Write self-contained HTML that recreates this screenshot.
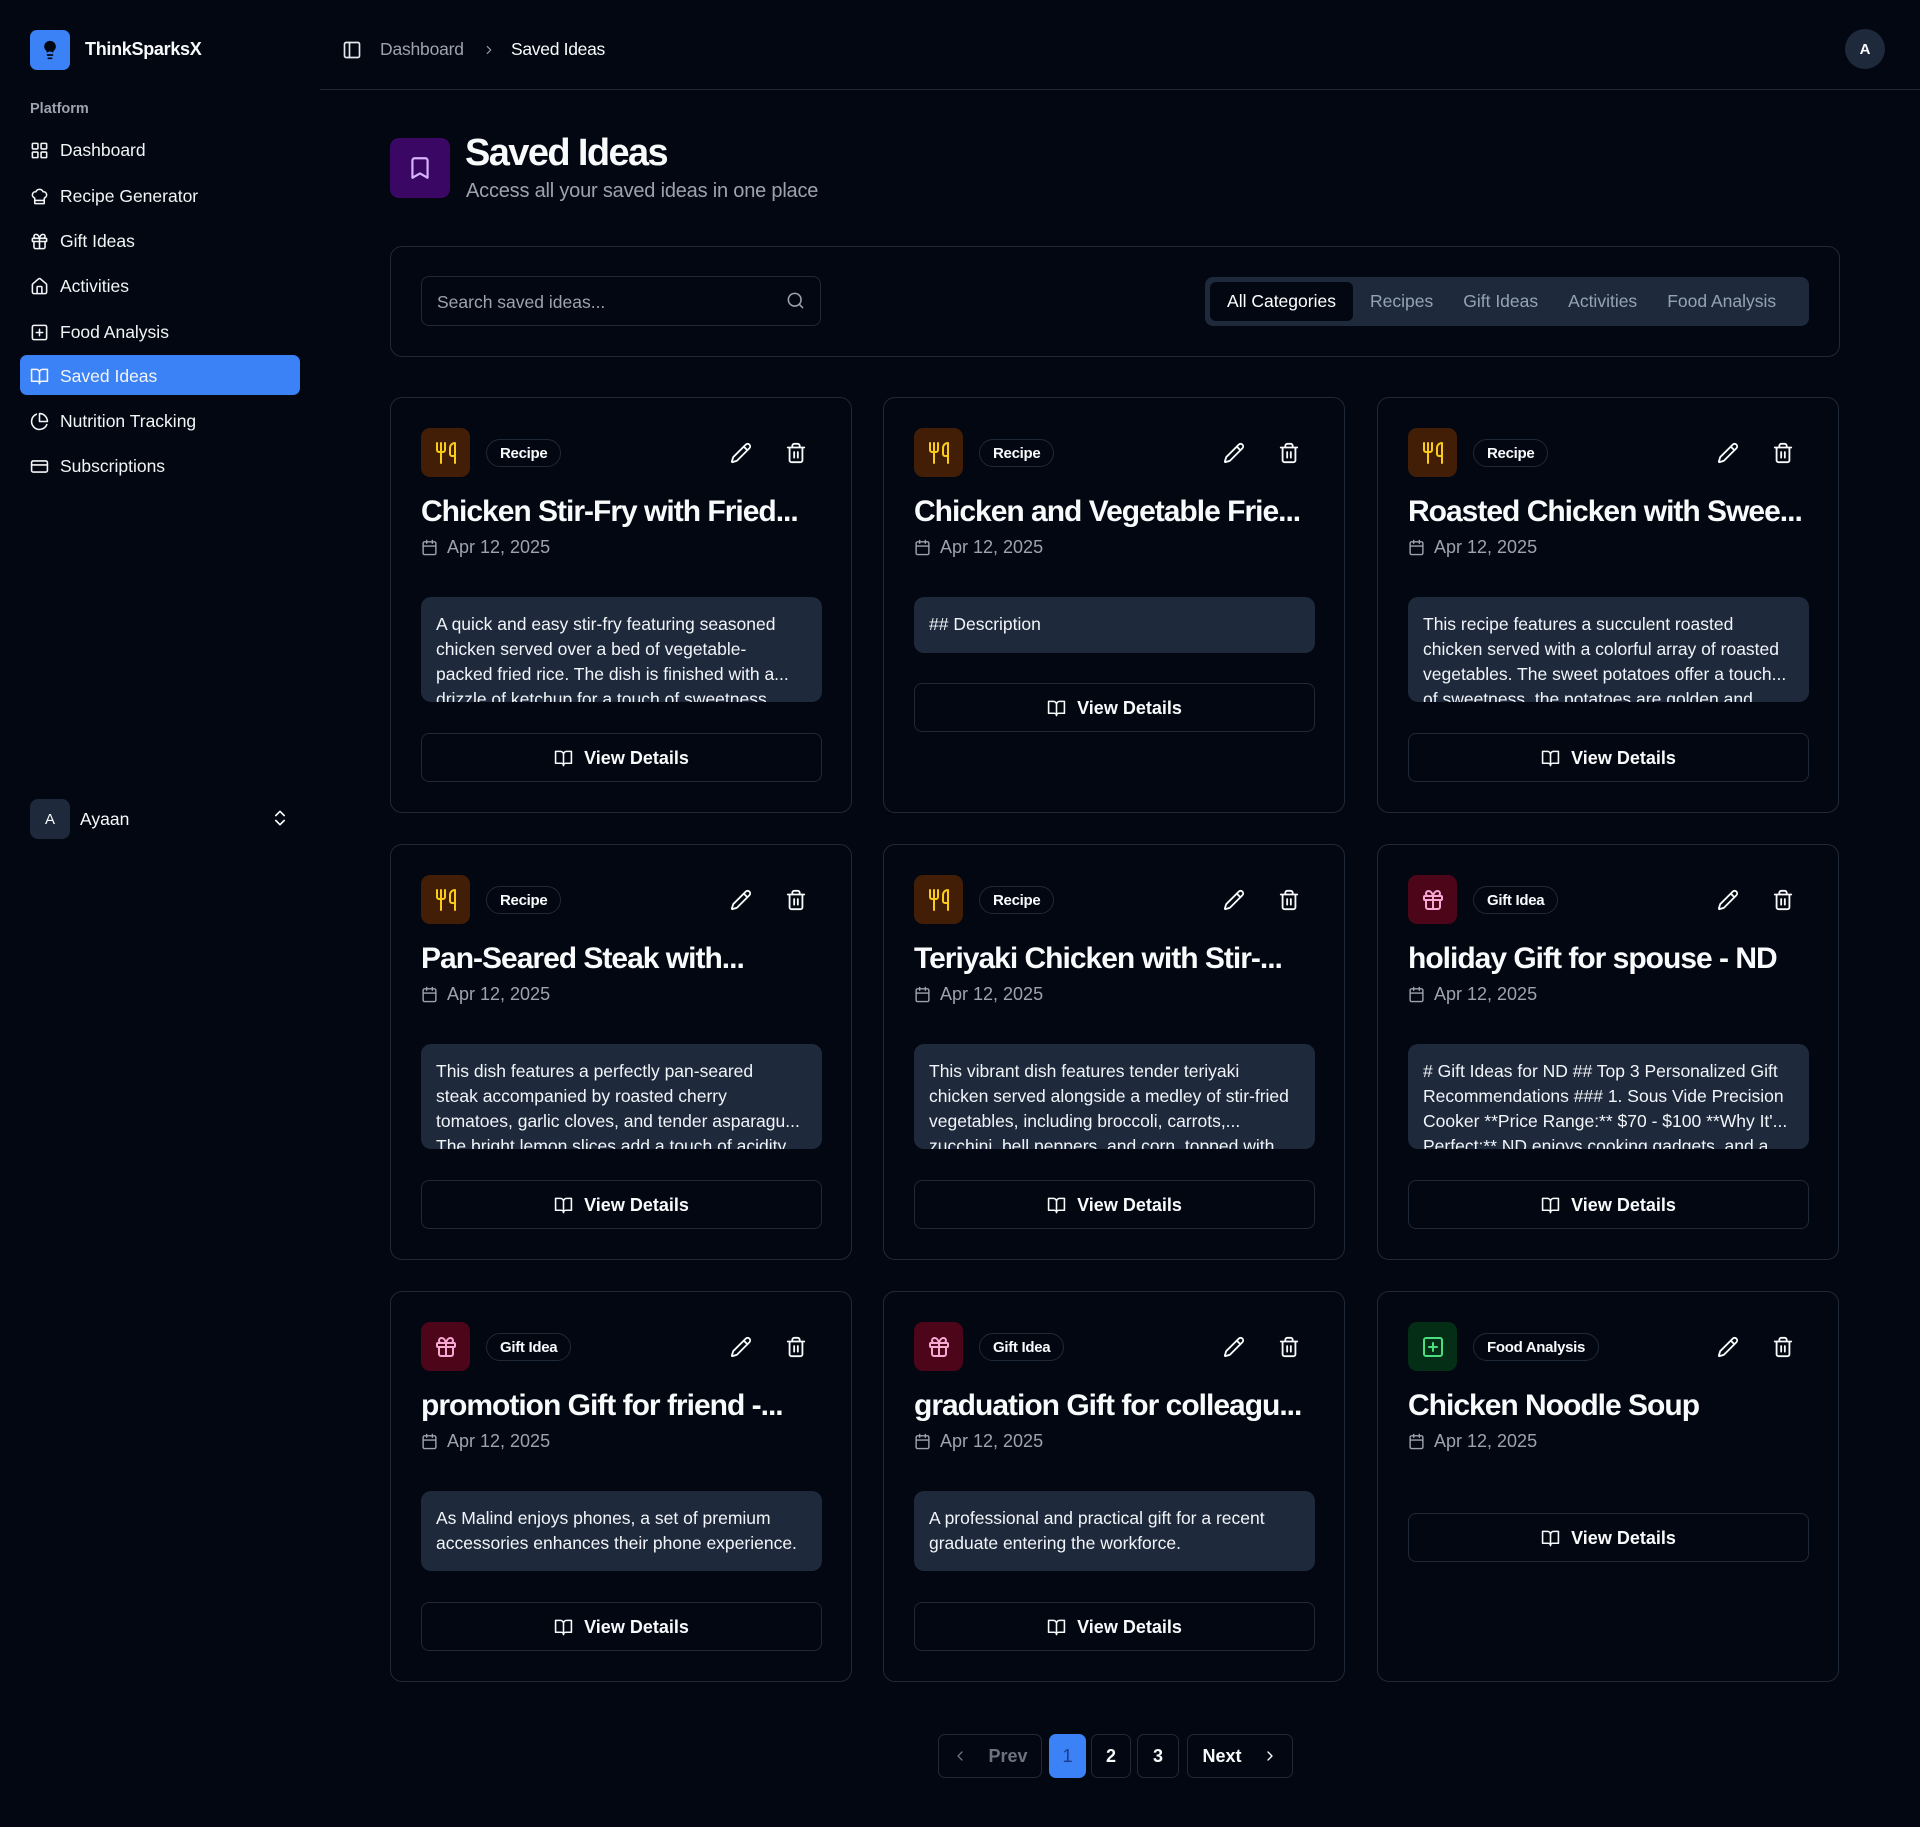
<!DOCTYPE html>
<html><head><meta charset="utf-8"><style>
*{box-sizing:border-box;margin:0;padding:0}
body{width:1920px;height:1827px;background:#030712;color:#f9fafb;font-family:"Liberation Sans",sans-serif;position:relative;overflow:hidden}
svg{fill:none;stroke:currentColor;stroke-width:2;stroke-linecap:round;stroke-linejoin:round}
.abs{position:absolute}
.nav{position:absolute;left:20px;width:280px;height:40px;border-radius:7px;display:flex;align-items:center;padding-left:10px;font-size:17.5px;color:#f3f4f6;padding-top:2px}
.nav svg{width:19px;height:19px;margin-right:11px}
.nav.active{background:#3b82f6}
.card{position:absolute;width:462px;border:1px solid #1f2937;border-radius:12px}
.ic{position:absolute;left:30px;top:30px;width:49px;height:49px;border-radius:9px;display:flex;align-items:center;justify-content:center}
.ic svg{width:24px;height:24px}
.badge{position:absolute;left:95px;top:41px;height:28px;border:1px solid #1f2937;border-radius:14px;padding:1px 13px 0;font-size:15px;font-weight:bold;line-height:26px;letter-spacing:-0.3px}
.ed{position:absolute;left:339px;top:44px;width:22px;height:22px}
.tr{position:absolute;left:394px;top:44px;width:22px;height:22px}
.ttl{position:absolute;left:30px;top:95px;font-size:30px;font-weight:bold;letter-spacing:-1px;white-space:nowrap;line-height:38px}
.dt{position:absolute;left:30px;top:137px;font-size:18px;color:#9ca3af;display:flex;align-items:center;line-height:24px}
.dt svg{width:17px;height:17px;margin-right:9px}
.desc{position:absolute;left:30px;width:401px;background:#1e293b;border-radius:10px;padding:15px 15px 0;font-size:17.5px;line-height:25px;overflow:hidden;color:#f1f5f9;top:199px}
.desc div{white-space:nowrap}
.btn{position:absolute;left:30px;width:401px;height:49px;border:1px solid #1f2937;border-radius:8px;display:flex;align-items:center;justify-content:center;font-size:18px;font-weight:bold;color:#f9fafb;padding-top:2px}
.btn svg{width:19px;height:19px;margin-right:11px}
.rec{background:#431e07;color:#facc15}
.gift{background:#4c0519;color:#f9a8d4}
.food{background:#052e16;color:#4ade80}
.pg{position:absolute;top:1734px;height:44px;border:1px solid #1f2937;border-radius:7px;display:flex;align-items:center;justify-content:center;font-size:18px;font-weight:bold}
.tab{display:flex;align-items:center;padding:0 15px;white-space:nowrap;flex-shrink:0}
</style></head><body>
<svg width="0" height="0" style="position:absolute"><defs>
<symbol id="ut" viewBox="0 0 24 24"><path d="M3 2v7c0 1.1.9 2 2 2h4a2 2 0 0 0 2-2V2M7 2v20M21 15V2a5 5 0 0 0-5 5v6c0 1.1.9 2 2 2h3Zm0 0v7"/></symbol>
<symbol id="gf" viewBox="0 0 24 24"><rect x="3" y="8" width="18" height="4" rx="1"/><path d="M12 8v13M19 12v7a2 2 0 0 1-2 2H7a2 2 0 0 1-2-2v-7M7.5 8a2.5 2.5 0 0 1 0-5A4.8 8 0 0 1 12 8a4.8 8 0 0 1 4.5-5 2.5 2.5 0 0 1 0 5"/></symbol>
<symbol id="sp" viewBox="0 0 24 24"><rect x="3" y="3" width="18" height="18" rx="2"/><path d="M8 12h8M12 8v8"/></symbol>
<symbol id="pe" viewBox="0 0 24 24"><path d="M21.174 6.812a1 1 0 0 0-3.986-3.987L3.842 16.174a2 2 0 0 0-.5.83l-1.321 4.352a.5.5 0 0 0 .623.622l4.353-1.32a2 2 0 0 0 .83-.497zM15 5l4 4"/></symbol>
<symbol id="tr" viewBox="0 0 24 24"><path d="M3 6h18M19 6v14c0 1-1 2-2 2H7c-1 0-2-1-2-2V6M8 6V4c0-1 1-2 2-2h4c1 0 2 1 2 2v2M10 11v6M14 11v6"/></symbol>
<symbol id="ca" viewBox="0 0 24 24"><rect x="3" y="4" width="18" height="18" rx="2"/><path d="M16 2v4M8 2v4M3 10h18"/></symbol>
<symbol id="bk" viewBox="0 0 24 24"><path d="M2 3h6a4 4 0 0 1 4 4v14a3 3 0 0 0-3-3H2zM22 3h-6a4 4 0 0 0-4 4v14a3 3 0 0 1 3-3h7z"/></symbol>
</defs></svg>

<!-- sidebar -->
<div class="abs" style="left:30px;top:30px;width:40px;height:40px;border-radius:7px;background:#3b82f6;display:flex;align-items:center;justify-content:center">
<svg width="20" height="22" viewBox="0 0 24 24" style="fill:#030712;stroke:#030712"><path d="M9 18h6M10 22h4M15 14c.2-1 .7-1.7 1.5-2.5 1-.9 1.5-2.2 1.5-3.5A6 6 0 0 0 6 8c0 1 .2 2.2 1.5 3.5.7.7 1.3 1.5 1.5 2.5"/></svg></div>
<div class="abs" style="left:85px;top:39px;font-size:18px;font-weight:bold;letter-spacing:-0.3px">ThinkSparksX</div>
<div class="abs" style="left:30px;top:101px;font-size:14.5px;color:#9ca3af;font-weight:bold">Platform</div>
<div class="nav" style="top:129px"><svg viewBox="0 0 24 24"><rect x="3" y="3" width="7" height="7" rx="1"/><rect x="14" y="3" width="7" height="7" rx="1"/><rect x="3" y="14" width="7" height="7" rx="1"/><rect x="14" y="14" width="7" height="7" rx="1"/></svg>Dashboard</div>
<div class="nav" style="top:175px"><svg viewBox="0 0 24 24"><path d="M17 21a1 1 0 0 0 1-1v-5.35c0-.457.316-.844.727-1.041a4 4 0 0 0-2.134-7.589 5 5 0 0 0-9.186 0 4 4 0 0 0-2.134 7.588c.411.198.727.585.727 1.041V20a1 1 0 0 0 1 1ZM6 17h12"/></svg>Recipe Generator</div>
<div class="nav" style="top:220px"><svg><use href="#gf"/></svg>Gift Ideas</div>
<div class="nav" style="top:265px"><svg viewBox="0 0 24 24"><path d="M15 21v-8a1 1 0 0 0-1-1h-4a1 1 0 0 0-1 1v8M3 10a2 2 0 0 1 .709-1.528l7-5.999a2 2 0 0 1 2.582 0l7 5.999A2 2 0 0 1 21 10v9a2 2 0 0 1-2 2H5a2 2 0 0 1-2-2z"/></svg>Activities</div>
<div class="nav" style="top:311px"><svg><use href="#sp"/></svg>Food Analysis</div>
<div class="nav active" style="top:355px"><svg><use href="#bk"/></svg>Saved Ideas</div>
<div class="nav" style="top:400px"><svg viewBox="0 0 24 24"><path d="M21.21 15.89A10 10 0 1 1 8 2.83M22 12A10 10 0 0 0 12 2v10z"/></svg>Nutrition Tracking</div>
<div class="nav" style="top:445px"><svg viewBox="0 0 24 24"><rect x="2" y="5" width="20" height="14" rx="2"/><path d="M2 10h20"/></svg>Subscriptions</div>
<div class="abs" style="left:30px;top:799px;width:40px;height:40px;border-radius:8px;background:#1e293b;display:flex;align-items:center;justify-content:center;font-size:15px">A</div>
<div class="abs" style="left:80px;top:809px;font-size:17.5px">Ayaan</div>
<svg class="abs" style="left:270px;top:808px;width:20px;height:20px" viewBox="0 0 24 24"><path d="m7 15 5 5 5-5M7 9l5-5 5 5"/></svg>

<!-- topbar -->
<svg class="abs" style="left:342px;top:40px;width:20px;height:20px;color:#e5e7eb" viewBox="0 0 24 24"><rect x="3" y="3" width="18" height="18" rx="2"/><path d="M9 3v18"/></svg>
<div class="abs" style="left:380px;top:39px;font-size:17.5px;color:#9ca3af;letter-spacing:-0.2px">Dashboard</div>
<svg class="abs" style="left:482px;top:43px;width:14px;height:14px;color:#9ca3af" viewBox="0 0 24 24"><path d="m9 18 6-6-6-6"/></svg>
<div class="abs" style="left:511px;top:39px;font-size:17.5px;letter-spacing:-0.3px">Saved Ideas</div>
<div class="abs" style="left:1845px;top:29px;width:40px;height:40px;border-radius:50%;background:#1e293b;display:flex;align-items:center;justify-content:center;font-size:15px;font-weight:bold">A</div>
<div class="abs" style="left:320px;top:89px;width:1600px;height:1px;background:#1f2937"></div>

<!-- header -->
<div class="abs" style="left:390px;top:138px;width:60px;height:60px;border-radius:9px;background:#3b0764;display:flex;align-items:center;justify-content:center;color:#d8b4fe"><svg width="26" height="26" viewBox="0 0 24 24"><path d="m19 21-7-4-7 4V5a2 2 0 0 1 2-2h10a2 2 0 0 1 2 2v16z"/></svg></div>
<div class="abs" style="left:465px;top:132px;font-size:38px;font-weight:bold;letter-spacing:-1.6px">Saved Ideas</div>
<div class="abs" style="left:466px;top:180px;font-size:20px;color:#9ca3af;letter-spacing:-0.2px">Access all your saved ideas in one place</div>

<!-- filter -->
<div class="abs" style="left:390px;top:246px;width:1450px;height:111px;border:1px solid #1f2937;border-radius:12px"></div>
<div class="abs" style="left:421px;top:276px;width:400px;height:50px;border:1px solid #1f2937;border-radius:8px;font-size:17.5px;color:#9ca3af;padding:15px 15px">Search saved ideas...</div>
<svg class="abs" style="left:786px;top:291px;width:19px;height:19px;color:#9ca3af" viewBox="0 0 24 24"><circle cx="11" cy="11" r="8"/><path d="m21 21-4.3-4.3"/></svg>
<div class="abs" style="left:1205px;top:277px;width:604px;height:49px;background:#1e293b;border-radius:8px;padding:5px;display:flex;font-size:17.5px;color:#94a3b8">
<div style="background:#030712;color:#fff;border-radius:6px;width:143px;flex-shrink:0;display:flex;align-items:center;justify-content:center;white-space:nowrap">All Categories</div>
<div class="tab" style="padding-left:17px">Recipes</div>
<div class="tab">Gift Ideas</div>
<div class="tab">Activities</div>
<div class="tab">Food Analysis</div>
</div>

<!-- row 1 -->
<div class="card" style="left:390px;top:397px;height:416px">
<div class="ic rec"><svg><use href="#ut"/></svg></div><div class="badge">Recipe</div>
<svg class="ed"><use href="#pe"/></svg><svg class="tr"><use href="#tr"/></svg>
<div class="ttl">Chicken Stir-Fry with Fried...</div>
<div class="dt"><svg><use href="#ca"/></svg>Apr 12, 2025</div>
<div class="desc" style="height:105px"><div>A quick and easy stir-fry featuring seasoned</div><div>chicken served over a bed of vegetable-</div><div>packed fried rice. The dish is finished with a...</div><div>drizzle of ketchup for a touch of sweetness</div></div>
<div class="btn" style="top:335px"><svg><use href="#bk"/></svg>View Details</div></div>

<div class="card" style="left:883px;top:397px;height:416px">
<div class="ic rec"><svg><use href="#ut"/></svg></div><div class="badge">Recipe</div>
<svg class="ed"><use href="#pe"/></svg><svg class="tr"><use href="#tr"/></svg>
<div class="ttl">Chicken and Vegetable Frie...</div>
<div class="dt"><svg><use href="#ca"/></svg>Apr 12, 2025</div>
<div class="desc" style="height:56px"><div>## Description</div></div>
<div class="btn" style="top:285px"><svg><use href="#bk"/></svg>View Details</div></div>

<div class="card" style="left:1377px;top:397px;height:416px">
<div class="ic rec"><svg><use href="#ut"/></svg></div><div class="badge">Recipe</div>
<svg class="ed"><use href="#pe"/></svg><svg class="tr"><use href="#tr"/></svg>
<div class="ttl">Roasted Chicken with Swee...</div>
<div class="dt"><svg><use href="#ca"/></svg>Apr 12, 2025</div>
<div class="desc" style="height:105px"><div>This recipe features a succulent roasted</div><div>chicken served with a colorful array of roasted</div><div>vegetables. The sweet potatoes offer a touch...</div><div>of sweetness, the potatoes are golden and</div></div>
<div class="btn" style="top:335px"><svg><use href="#bk"/></svg>View Details</div></div>

<!-- row 2 -->
<div class="card" style="left:390px;top:844px;height:416px">
<div class="ic rec"><svg><use href="#ut"/></svg></div><div class="badge">Recipe</div>
<svg class="ed"><use href="#pe"/></svg><svg class="tr"><use href="#tr"/></svg>
<div class="ttl">Pan-Seared Steak with...</div>
<div class="dt"><svg><use href="#ca"/></svg>Apr 12, 2025</div>
<div class="desc" style="height:105px"><div>This dish features a perfectly pan-seared</div><div>steak accompanied by roasted cherry</div><div>tomatoes, garlic cloves, and tender asparagu...</div><div>The bright lemon slices add a touch of acidity</div></div>
<div class="btn" style="top:335px"><svg><use href="#bk"/></svg>View Details</div></div>

<div class="card" style="left:883px;top:844px;height:416px">
<div class="ic rec"><svg><use href="#ut"/></svg></div><div class="badge">Recipe</div>
<svg class="ed"><use href="#pe"/></svg><svg class="tr"><use href="#tr"/></svg>
<div class="ttl">Teriyaki Chicken with Stir-...</div>
<div class="dt"><svg><use href="#ca"/></svg>Apr 12, 2025</div>
<div class="desc" style="height:105px"><div>This vibrant dish features tender teriyaki</div><div>chicken served alongside a medley of stir-fried</div><div>vegetables, including broccoli, carrots,...</div><div>zucchini, bell peppers, and corn, topped with</div></div>
<div class="btn" style="top:335px"><svg><use href="#bk"/></svg>View Details</div></div>

<div class="card" style="left:1377px;top:844px;height:416px">
<div class="ic gift"><svg><use href="#gf"/></svg></div><div class="badge">Gift Idea</div>
<svg class="ed"><use href="#pe"/></svg><svg class="tr"><use href="#tr"/></svg>
<div class="ttl">holiday Gift for spouse - ND</div>
<div class="dt"><svg><use href="#ca"/></svg>Apr 12, 2025</div>
<div class="desc" style="height:105px"><div># Gift Ideas for ND ## Top 3 Personalized Gift</div><div>Recommendations ### 1. Sous Vide Precision</div><div>Cooker **Price Range:** $70 - $100 **Why It'...</div><div>Perfect:** ND enjoys cooking gadgets, and a</div></div>
<div class="btn" style="top:335px"><svg><use href="#bk"/></svg>View Details</div></div>

<!-- row 3 -->
<div class="card" style="left:390px;top:1291px;height:391px">
<div class="ic gift"><svg><use href="#gf"/></svg></div><div class="badge">Gift Idea</div>
<svg class="ed"><use href="#pe"/></svg><svg class="tr"><use href="#tr"/></svg>
<div class="ttl">promotion Gift for friend -...</div>
<div class="dt"><svg><use href="#ca"/></svg>Apr 12, 2025</div>
<div class="desc" style="height:80px"><div>As Malind enjoys phones, a set of premium</div><div>accessories enhances their phone experience.</div></div>
<div class="btn" style="top:310px"><svg><use href="#bk"/></svg>View Details</div></div>

<div class="card" style="left:883px;top:1291px;height:391px">
<div class="ic gift"><svg><use href="#gf"/></svg></div><div class="badge">Gift Idea</div>
<svg class="ed"><use href="#pe"/></svg><svg class="tr"><use href="#tr"/></svg>
<div class="ttl">graduation Gift for colleagu...</div>
<div class="dt"><svg><use href="#ca"/></svg>Apr 12, 2025</div>
<div class="desc" style="height:80px"><div>A professional and practical gift for a recent</div><div>graduate entering the workforce.</div></div>
<div class="btn" style="top:310px"><svg><use href="#bk"/></svg>View Details</div></div>

<div class="card" style="left:1377px;top:1291px;height:391px">
<div class="ic food"><svg><use href="#sp"/></svg></div><div class="badge">Food Analysis</div>
<svg class="ed"><use href="#pe"/></svg><svg class="tr"><use href="#tr"/></svg>
<div class="ttl">Chicken Noodle Soup</div>
<div class="dt"><svg><use href="#ca"/></svg>Apr 12, 2025</div>
<div class="btn" style="top:221px"><svg><use href="#bk"/></svg>View Details</div></div>

<!-- pagination -->
<div class="pg" style="left:938px;width:104px;color:#6b7280"><svg width="16" height="16" viewBox="0 0 24 24" style="margin-right:20px"><path d="m15 18-6-6 6-6"/></svg>Prev</div>
<div class="pg" style="left:1049px;width:37px;background:#3b82f6;border-color:#3b82f6;color:#1e3a8a;font-weight:normal">1</div>
<div class="pg" style="left:1091px;width:40px">2</div>
<div class="pg" style="left:1137px;width:42px">3</div>
<div class="pg" style="left:1187px;width:106px">Next<svg width="16" height="16" viewBox="0 0 24 24" style="margin-left:20px"><path d="m9 18 6-6-6-6"/></svg></div>
</body></html>
